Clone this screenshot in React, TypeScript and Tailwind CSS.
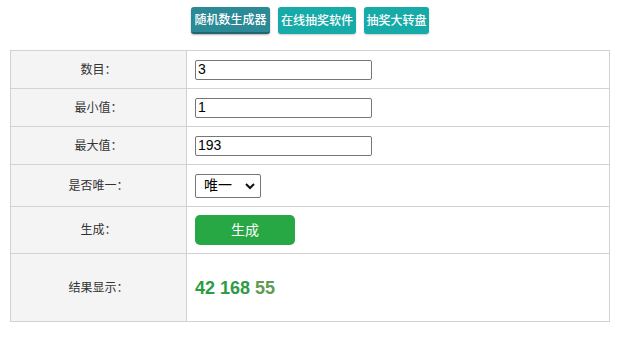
import { useState } from 'react';

const rows = [
  { label: '数目：', h: 'h-[38px]' },
  { label: '最小值：', h: 'h-[38px]' },
  { label: '最大值：', h: 'h-[38px]' },
];

export default function App() {
  const [count, setCount] = useState('3');
  const [min, setMin] = useState('1');
  const [max, setMax] = useState('193');
  const [unique, setUnique] = useState('1');
  const values = [count, min, max];
  const setters = [setCount, setMin, setMax];

  return (
    <div className="min-h-screen bg-white pt-[7px] font-['Liberation_Sans','Noto_Sans_CJK_SC',sans-serif] text-[#333]">
      {/* top nav buttons */}
      <div className="ml-[10px] flex w-[600px] justify-center gap-[8px]">
        <button className="flex h-[27px] w-[79px] shrink-0 items-center justify-center whitespace-nowrap rounded-[3px] border-b-2 border-[#1f6670] bg-[#2c8a96] text-[12px] font-medium text-white shadow-[0_1px_2px_rgba(0,0,0,0.3)]">
          随机数生成器
        </button>
        <button className="flex h-[27px] w-[78px] shrink-0 items-center justify-center whitespace-nowrap rounded-[3px] bg-[#16aaa8] text-[12px] font-medium text-white shadow-[0_1px_2px_rgba(0,0,0,0.2)]">
          在线抽奖软件
        </button>
        <button className="flex h-[27px] w-[65px] shrink-0 items-center justify-center whitespace-nowrap rounded-[3px] bg-[#16aaa8] text-[12px] font-medium text-white shadow-[0_1px_2px_rgba(0,0,0,0.2)]">
          抽奖大转盘
        </button>
      </div>

      <table className="ml-[10px] mt-[16px] w-[600px] border-collapse">
        <tbody>
          {rows.map((r, i) => (
            <tr key={i} className={r.h}>
              <td className="w-[176px] border border-[#d2d2d2] bg-[#f4f4f4] text-center text-[12px]">{r.label}</td>
              <td className="border border-[#d2d2d2] pl-[8px]">
                <input
                  value={values[i]}
                  onChange={(e) => setters[i](e.target.value)}
                  className="block h-[20px] w-[177px] rounded-[2px] border border-[#767676] px-[2px] text-[14px] text-black outline-none"
                />
              </td>
            </tr>
          ))}
          <tr className="h-[42px]">
            <td className="border border-[#d2d2d2] bg-[#f4f4f4] text-center text-[12px]">是否唯一：</td>
            <td className="border border-[#d2d2d2] pl-[8px]">
              <div className="relative h-[24px] w-[66px]">
                <select
                  value={unique}
                  onChange={(e) => setUnique(e.target.value)}
                  className="block h-[24px] w-[66px] appearance-none rounded-[2px] border border-[#767676] bg-white pl-[8px] text-[14px] text-black outline-none"
                >
                  <option value="1">唯一</option>
                  <option value="0">不唯一</option>
                </select>
                <svg className="pointer-events-none absolute right-[6px] top-[8px]" width="10" height="8" viewBox="0 0 10 8">
                  <path d="M1 2l4 4 4-4" fill="none" stroke="#111" strokeWidth="2" />
                </svg>
              </div>
            </td>
          </tr>
          <tr className="h-[47px]">
            <td className="border border-[#d2d2d2] bg-[#f4f4f4] text-center text-[12px]">生成：</td>
            <td className="border border-[#d2d2d2] pl-[8px]">
              <button className="flex h-[30px] w-[100px] items-center justify-center rounded-[5px] bg-[#28a745] text-[14px] text-white">
                生成
              </button>
            </td>
          </tr>
          <tr className="h-[68px]">
            <td className="border border-[#d2d2d2] bg-[#f4f4f4] text-center text-[12px]">结果显示：</td>
            <td className="border border-[#d2d2d2] pl-[8px]">
              <div className="flex gap-[5px] pt-[2px] text-[18px] font-bold">
                <span className="text-[#2a9e3e]">42</span>
                <span className="text-[#2f9a48]">168</span>
                <span className="text-[#5e9c52]">55</span>
              </div>
            </td>
          </tr>
        </tbody>
      </table>
    </div>
  );
}
